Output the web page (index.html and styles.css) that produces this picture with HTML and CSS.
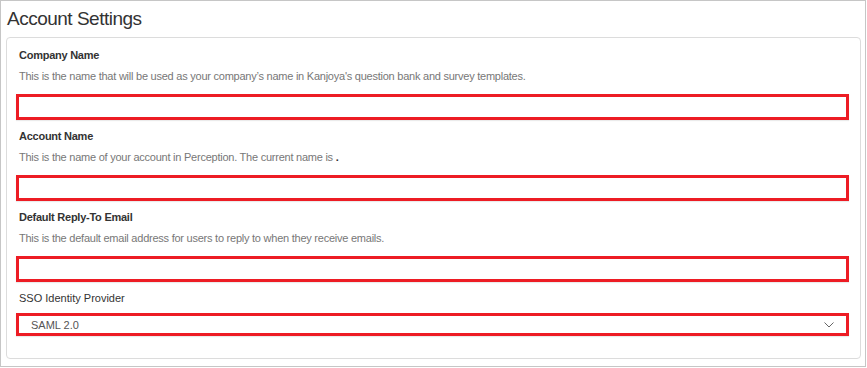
FILE: index.html
```html
<!DOCTYPE html>
<html>
<head>
<meta charset="utf-8">
<link rel="stylesheet" href="styles.css">
</head>
<body>
<div class="frame">
  <h1 class="title">Account Settings</h1>
  <div class="panel">
    <div class="group">
      <div class="label">Company Name</div>
      <div class="desc">This is the name that will be used as your company’s name in Kanjoya's question bank and survey templates.</div>
      <div class="input"></div>
    </div>
    <div class="group">
      <div class="label">Account Name</div>
      <div class="desc">This is the name of your account in Perception. The current name is <b>.</b></div>
      <div class="input"></div>
    </div>
    <div class="group">
      <div class="label">Default Reply-To Email</div>
      <div class="desc">This is the default email address for users to reply to when they receive emails.</div>
      <div class="input"></div>
    </div>
    <div class="group">
      <div class="label plain">SSO Identity Provider</div>
      <div class="select">
        <span class="select-text">SAML 2.0</span>
        <svg class="chev" width="10" height="6" viewBox="0 0 10 6"><path d="M0.5 0.5 L5 5 L9.5 0.5" fill="none" stroke="#666" stroke-width="1"/></svg>
      </div>
    </div>
  </div>
</div>
</body>
</html>
```

FILE: styles.css
```css
html, body {
  margin: 0;
  padding: 0;
  background: #fff;
}
body {
  font-family: "Liberation Sans", Arial, sans-serif;
}
.frame {
  width: 866px;
  height: 367px;
  box-sizing: border-box;
  border: 1px solid #c6c6c6;
}
.title {
  margin: 0;
  padding: 6px 0 0 6px;
  font-size: 19px;
  line-height: 24px;
  letter-spacing: -0.5px;
  font-weight: normal;
  color: #333;
}
.panel {
  margin: 6px 0 0 5px;
  width: 855px;
  height: 322px;
  box-sizing: border-box;
  border: 1px solid #dcdcdc;
  border-radius: 4px;
  padding: 10px 0 0 9px;
}
.group {
  display: flex;
  flex-direction: column;
}
.label {
  margin-left: 3px;
  font-size: 11px;
  line-height: 15px;
  font-weight: bold;
  letter-spacing: -0.25px;
  color: #333;
}
.label.plain {
  font-weight: normal;
  letter-spacing: 0;
  font-size: 11px;
  margin-top: 9px;
}
.desc {
  margin: 6px 0 0 3px;
  font-size: 11px;
  line-height: 15px;
  letter-spacing: -0.24px;
  color: #777;
}
.desc b {
  color: #333;
}
.input {
  margin-top: 10px;
  margin-bottom: 9px;
  width: 833px;
  height: 26px;
  box-sizing: border-box;
  border: 3px solid #ed1c24;
  box-shadow: 0 1px 1px rgba(0,0,0,0.08);
}
.group:nth-child(3) .input {
  margin-bottom: 0;
}
.select {
  margin-top: 7px;
  width: 833px;
  height: 23px;
  box-sizing: border-box;
  border: 3px solid #ed1c24;
  display: flex;
  align-items: center;
  justify-content: space-between;
  padding: 0 12px 0 12px;
  box-shadow: 0 1px 1px rgba(0,0,0,0.08);
}
.select-text {
  font-size: 11px;
  color: #555;
}
.chev {
  display: block;
}
```
